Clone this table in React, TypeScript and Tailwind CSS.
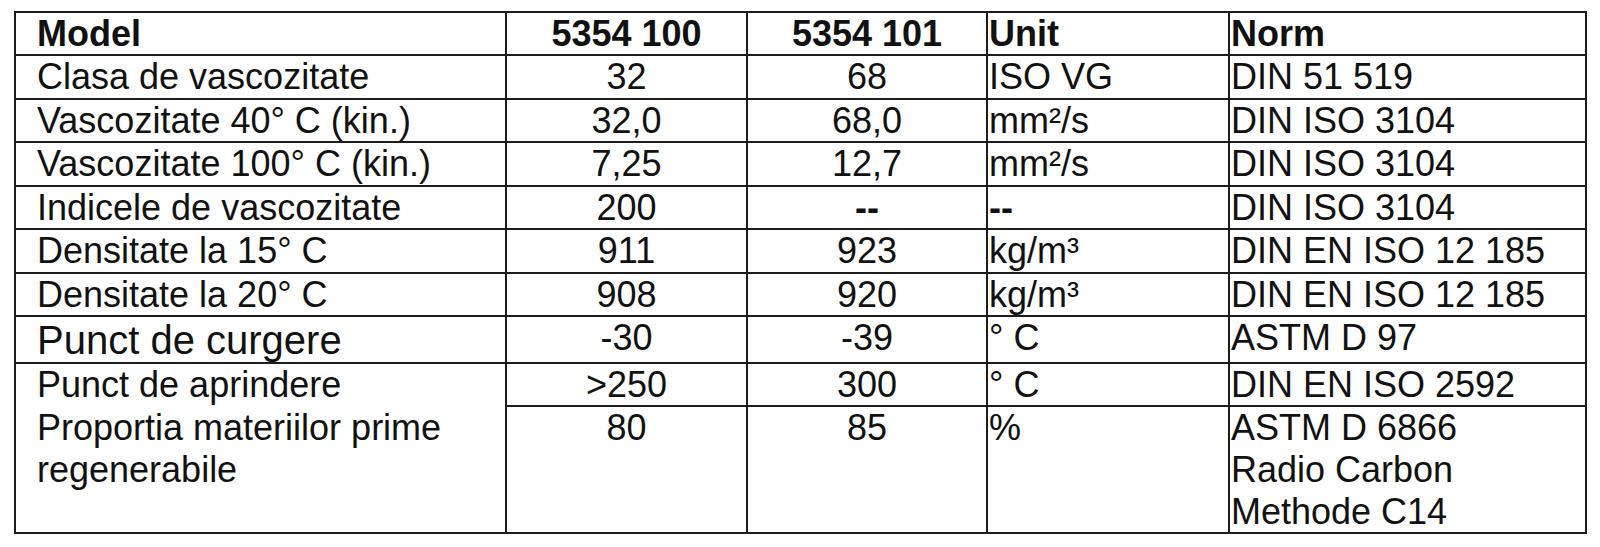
type Row = {
  label: string;
  a: string;
  b: string;
  unit: string;
  norm: string;
  bold?: boolean;
  big?: boolean;
  dashBold?: boolean;
};

const rows: Row[] = [
  { label: "Clasa de vascozitate", a: "32", b: "68", unit: "ISO VG", norm: "DIN 51 519" },
  { label: "Vascozitate 40° C (kin.)", a: "32,0", b: "68,0", unit: "mm²/s", norm: "DIN ISO 3104" },
  { label: "Vascozitate 100° C (kin.)", a: "7,25", b: "12,7", unit: "mm²/s", norm: "DIN ISO 3104" },
  { label: "Indicele de vascozitate", a: "200", b: "--", unit: "--", norm: "DIN ISO 3104", dashBold: true },
  { label: "Densitate la 15° C", a: "911", b: "923", unit: "kg/m³", norm: "DIN EN ISO 12 185" },
  { label: "Densitate la 20° C", a: "908", b: "920", unit: "kg/m³", norm: "DIN EN ISO 12 185" },
  { label: "Punct de curgere", a: "-30", b: "-39", unit: "° C", norm: "ASTM D 97", big: true },
];

const cell = "border-r-2 border-b-2 border-[#1c1c1c] overflow-hidden";

export default function App() {
  return (
    <div className="min-h-[547px] w-[1600px] bg-white pt-[11px] pl-[14px] font-['Liberation_Sans',Arial,sans-serif] text-[36px] leading-[42px] text-[#111]">
      <div className="grid w-max grid-cols-[491px_241px_240px_242px_357px] grid-rows-[43px_44px_43px_44px_43px_44px_43px_47px_43px_127px] border-t-2 border-l-2 border-[#1c1c1c]">
        {/* header */}
        <div className={`${cell} pl-[21px] font-bold`}>Model</div>
        <div className={`${cell} text-center font-bold`}>5354 100</div>
        <div className={`${cell} text-center font-bold`}>5354 101</div>
        <div className={`${cell} pl-[1px] font-bold`}>Unit</div>
        <div className={`${cell} pl-[1px] font-bold`}>Norm</div>

        {rows.map((r) => (
          <div key={r.label} className="contents">
            <div className={`${cell} pl-[21px] ${r.big ? "text-[40px] leading-[46px]" : ""}`}>{r.label}</div>
            <div className={`${cell} text-center`}>{r.a}</div>
            <div className={`${cell} text-center ${r.dashBold ? "font-bold" : ""}`}>{r.b}</div>
            <div className={`${cell} pl-[1px] ${r.dashBold ? "font-bold" : ""}`}>{r.unit}</div>
            <div className={`${cell} pl-[1px]`}>{r.norm}</div>
          </div>
        ))}

        {/* punct de aprindere: no bottom line under the label cell */}
        <div className="overflow-hidden border-r-2 border-[#1c1c1c] pl-[21px]">Punct de aprindere</div>
        <div className={`${cell} text-center`}>&gt;250</div>
        <div className={`${cell} text-center`}>300</div>
        <div className={`${cell} pl-[1px]`}>° C</div>
        <div className={`${cell} pl-[1px]`}>DIN EN ISO 2592</div>

        {/* last row */}
        <div className={`${cell} pl-[21px]`}>
          Proportia materiilor prime
          <br />
          regenerabile
        </div>
        <div className={`${cell} text-center`}>80</div>
        <div className={`${cell} text-center`}>85</div>
        <div className={`${cell} pl-[1px]`}>%</div>
        <div className={`${cell} pl-[1px]`}>
          ASTM D 6866
          <br />
          Radio Carbon
          <br />
          Methode C14
        </div>
      </div>
    </div>
  );
}
